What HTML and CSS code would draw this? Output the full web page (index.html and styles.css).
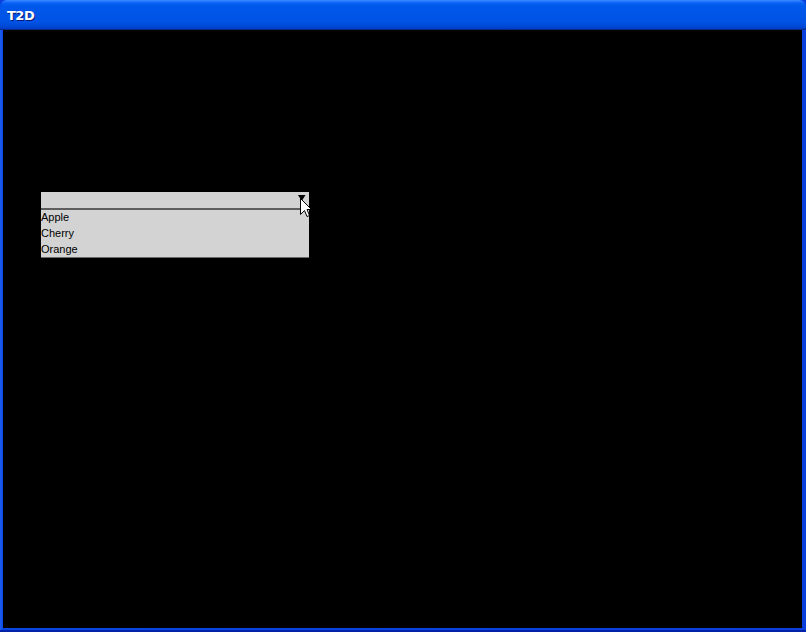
FILE: index.html
```html
<!DOCTYPE html>
<html>
<head>
<meta charset="utf-8">
<link rel="stylesheet" href="styles.css">
</head>
<body>
<div class="window">
  <div class="titlebar"><span class="title">T2D</span></div>
  <div class="frame">
    <div class="client">
      <div class="combo">
        <div class="combo-head">
          <svg class="arrow" width="8" height="6" viewBox="0 0 8 6"><path d="M0 0H7.5L3.75 6Z" fill="#000"/></svg>
          <svg class="cursor" width="12" height="19" viewBox="0 0 12 19"><path d="M0.5 0.5V16.5L4.5 12.5L7 18.5L9.5 17.5L7 11.5H11.5Z" fill="#fff" stroke="#000" stroke-width="1"/></svg>
        </div>
        <div class="combo-list">
          <div class="item">Apple</div>
          <div class="item">Cherry</div>
          <div class="item">Orange</div>
        </div>
      </div>
    </div>
  </div>
</div>
</body>
</html>
```
FILE: styles.css
```css
html, body {
  margin: 0;
  padding: 0;
  background: #000;
}
.window {
  width: 806px;
  height: 632px;
  display: flex;
  flex-direction: column;
  background: #0a3fdc;
}
.titlebar {
  height: 29px;
  border-bottom: 1px solid #0a2a8c;
  border-radius: 7px 7px 0 0;
  background: linear-gradient(to bottom, #3d8cff 0, #2a7cff 1px, #0a62f4 3px, #0058ec 6px, #0056e8 40%, #0053e4 75%, #0049d8 90%, #003cc0 100%);
  display: flex;
  align-items: center;
  padding-left: 7px;
}
.title {
  font-family: "DejaVu Sans", "Liberation Sans", sans-serif;
  font-weight: bold;
  font-size: 13px;
  color: #fff;
  text-shadow: 1px 1px 0 #0a1878;
  letter-spacing: -0.5px;
  margin-top: 1px;
}
.frame {
  flex: 1;
  display: flex;
  padding: 0 4px 4px 3px;
  background: linear-gradient(to right, #1e5cf0 0, #1a58ec 1px, #0846e4 3px, #0a3fdc 100%);
  box-shadow: inset 0 -2px 0 #0022a8;
}
.client {
  flex: 1;
  background: #000;
  padding-top: 162px;
  padding-left: 38px;
}
.combo {
  width: 268px;
  background: #d3d3d3;
  font-family: "Liberation Sans", Arial, sans-serif;
  font-size: 11px;
  color: #000;
}
.combo-head {
  position: relative;
  height: 16px;
  border-bottom: 2px solid #5e5e5e;
}
.arrow {
  position: absolute;
  left: 257px;
  top: 3px;
}
.cursor {
  position: absolute;
  left: 259px;
  top: 6px;
}
.combo-list {
  border-bottom: 1px solid #6a6a6a;
}
.item {
  height: 16px;
  line-height: 14px;
}
.item:last-child {
  height: 15px;
}
```
